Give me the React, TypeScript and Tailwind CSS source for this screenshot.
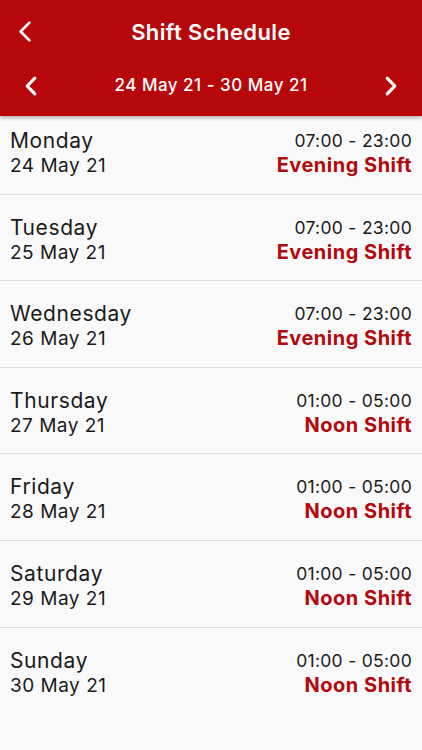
import React from "react";

const days = [
  { day: "Monday", date: "24 May 21", time: "07:00 - 23:00", shift: "Evening Shift" },
  { day: "Tuesday", date: "25 May 21", time: "07:00 - 23:00", shift: "Evening Shift" },
  { day: "Wednesday", date: "26 May 21", time: "07:00 - 23:00", shift: "Evening Shift" },
  { day: "Thursday", date: "27 May 21", time: "01:00 - 05:00", shift: "Noon Shift" },
  { day: "Friday", date: "28 May 21", time: "01:00 - 05:00", shift: "Noon Shift" },
  { day: "Saturday", date: "29 May 21", time: "01:00 - 05:00", shift: "Noon Shift" },
  { day: "Sunday", date: "30 May 21", time: "01:00 - 05:00", shift: "Noon Shift" },
];

function Chevron({ dir, w, h, sw }: { dir: "l" | "r"; w: number; h: number; sw: number }) {
  return (
    <svg width={w} height={h} viewBox={`0 0 ${w} ${h}`} fill="none">
      <path
        d={dir === "l" ? `M${w - sw} ${sw} L${sw} ${h / 2} L${w - sw} ${h - sw}` : `M${sw} ${sw} L${w - sw} ${h / 2} L${sw} ${h - sw}`}
        stroke="white"
        strokeWidth={sw}
        strokeLinecap="round"
        strokeLinejoin="round"
      />
    </svg>
  );
}

export default function App() {
  return (
    <div className="w-[422px] h-[750px] bg-[#f9f9f9] overflow-hidden relative" style={{ fontFamily: "Inter, 'Noto Sans', sans-serif" }}>
      <div className="relative z-10 h-[116px] bg-[#b8070b] shadow-[0_2px_4px_rgba(0,0,0,0.3)] text-white">
        <div className="relative flex items-center justify-center h-[64px]">
          <div className="absolute left-[18px] top-[20px]">
            <Chevron dir="l" w={14} h={23} sw={2.6} />
          </div>
          <span className="text-[22px] font-semibold tracking-[0.4px]">Shift Schedule</span>
        </div>
        <div className="flex items-center justify-between px-[24px] h-[44px]">
          <Chevron dir="l" w={14} h={22} sw={3.2} />
          <span className="text-[17px] font-medium tracking-[0.5px]">24 May 21 - 30 May 21</span>
          <Chevron dir="r" w={14} h={22} sw={3.2} />
        </div>
      </div>
      <div className="-mt-[8px]">
        {days.map((d, i) => (
          <div key={d.day} className={`h-[86.6px] flex justify-between px-[10px] pt-[20px] ${i < days.length - 1 ? "border-b border-[#dcdcdc]" : ""}`}>
            <div className="flex flex-col text-[#1a1a1a]">
              <span className="text-[21px] leading-[26px] tracking-[0.6px]">{d.day}</span>
              <span className="text-[19px] leading-[24px] tracking-[0.5px]">{d.date}</span>
            </div>
            <div className="flex flex-col items-end">
              <span className="text-[17.5px] leading-[26px] text-[#1a1a1a] tracking-[0.3px]">{d.time}</span>
              <span className="text-[20px] leading-[22px] font-bold text-[#b3080d] tracking-[0.5px]">{d.shift}</span>
            </div>
          </div>
        ))}
      </div>
    </div>
  );
}
